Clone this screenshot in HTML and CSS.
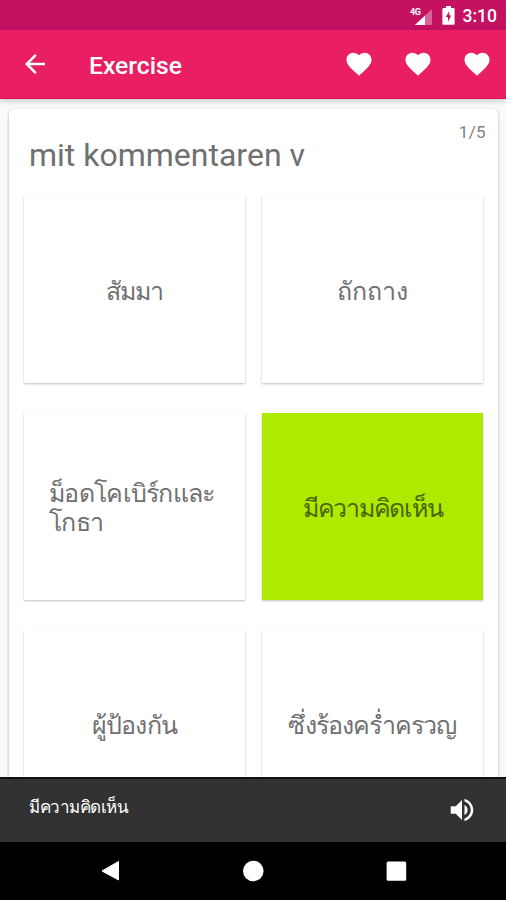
FILE: index.html
```html
<!DOCTYPE html>
<html lang="de">
<head>
<meta charset="utf-8">
<title>Exercise</title>
<link rel="stylesheet" href="styles.css">
</head>
<body>
<div class="screen">
  <div class="status">
    <svg class="signal" width="24" height="22" viewBox="0 0 24 22">
      <path d="M23 2v16H6z" fill="#fff" opacity=".35"/>
      <path d="M16 8.600V18H6z" fill="#fff"/>
      <text class="net" x="1" y="8">4G</text>
    </svg>
    <svg class="battery" width="13" height="19" viewBox="0 0 13 19">
      <path d="M4 0h5v2h2.600q1 0 1 1v14.800q0 1-1 1H1.400q-1 0-1-1V3q0-1 1-1H4z" fill="#fff"/>
      <path d="M7.300 5 3.800 11h2.200v4.700L9.200 9.500H7.300z" fill="#c51162"/>
    </svg>
    <span class="clock">3:10</span>
  </div>
  <header class="appbar">
    <svg class="back" width="30" height="30" viewBox="0 0 24 24"><path d="M20 11H7.830l5.590-5.590L12 4l-8 8 8 8 1.410-1.410L7.830 13H20z"/></svg>
    <h1>Exercise</h1>
    <div class="lives">
      <svg width="30" height="30" viewBox="0 0 24 24"><path d="M12 21.350l-1.450-1.320C5.400 15.360 2 12.280 2 8.500 2 5.420 4.420 3 7.500 3c1.740 0 3.410.810 4.500 2.090C13.090 3.810 14.760 3 16.500 3 19.580 3 22 5.420 22 8.500c0 3.780-3.400 6.860-8.550 11.540z"/></svg>
      <svg width="30" height="30" viewBox="0 0 24 24"><path d="M12 21.350l-1.450-1.320C5.400 15.360 2 12.280 2 8.500 2 5.420 4.420 3 7.500 3c1.740 0 3.410.810 4.500 2.090C13.090 3.810 14.760 3 16.500 3 19.580 3 22 5.420 22 8.500c0 3.780-3.400 6.860-8.550 11.540z"/></svg>
      <svg width="30" height="30" viewBox="0 0 24 24"><path d="M12 21.350l-1.450-1.320C5.400 15.360 2 12.280 2 8.500 2 5.420 4.420 3 7.500 3c1.740 0 3.410.810 4.500 2.090C13.090 3.810 14.760 3 16.500 3 19.580 3 22 5.420 22 8.500c0 3.780-3.400 6.860-8.550 11.540z"/></svg>
    </div>
  </header>
  <main>
    <section class="card">
      <div class="head">
        <h2>mit kommentaren v</h2>
        <span class="progress">1/5</span>
      </div>
      <div class="tiles" lang="th">
        <div class="tile"><span>สัมมา</span></div>
        <div class="tile loose"><span>ถักถาง</span></div>
        <div class="tile long"><span>ม็อดโคเบิร์กและ<br>โกธา</span></div>
        <div class="tile right"><span>มีความคิดเห็น</span></div>
        <div class="tile"><span>ผู้ป้องกัน</span></div>
        <div class="tile"><span>ซึ่งร้องคร่ำครวญ</span></div>
      </div>
    </section>
  </main>
  <div class="snackbar">
    <span class="answer" lang="th">มีความคิดเห็น</span>
    <svg width="30" height="30" viewBox="0 0 24 24"><path d="M3 9v6h4l5 5V4L7 9zm13.500 3c0-1.770-1.020-3.290-2.500-4.030v8.050c1.480-.730 2.500-2.250 2.500-4.020zM14 3.230v2.060c2.890.860 5 3.540 5 6.710s-2.110 5.850-5 6.710v2.060c4.010-.910 7-4.490 7-8.770s-2.990-7.860-7-8.770z"/></svg>
  </div>
  <nav class="navbar">
    <svg width="24" height="24" viewBox="0 0 24 24"><path d="M20.500 2.500v18.400L4 12z" stroke="#fff" stroke-linejoin="round"/></svg>
    <svg width="24" height="24" viewBox="0 0 24 24"><circle cx="12.300" cy="12" r="10.300"/></svg>
    <svg width="24" height="24" viewBox="0 0 24 24"><rect x="2.600" y="2.500" width="19.600" height="19.300" rx="1.500"/></svg>
  </nav>
</div>
</body>
</html>
```

FILE: styles.css
```css
* { box-sizing: border-box; }
body { margin: 0; font-family: Roboto, "Noto Sans", sans-serif; }
svg { display: block; flex: none; fill: #fff; }
.screen { width: 506px; height: 900px; display: flex; flex-direction: column; overflow: hidden; background: #fafafa; }

.status { height: 30px; flex: none; display: flex; align-items: center; justify-content: flex-end; padding: 1px 9px 0 0; background: #c51162; color: #fff; }
.signal { margin: 4px 9px 0 0; }
.net { font: 700 9px Roboto, sans-serif; letter-spacing: -0.5px; }
.battery { margin-right: 8px; }
.clock { font-size: 17.500px; font-weight: 500; line-height: 30px; }

.appbar { height: 69px; flex: none; display: flex; align-items: center; padding: 0 14px 0 20px; background: #e91e63; color: #fff; border-bottom: 1px solid #e00b52; box-shadow: 0 2px 6px rgba(0,0,0,.2); position: relative; }
.appbar h1 { margin: 3px 0 0 39px; font-size: 24.700px; font-weight: 500; line-height: 32px; }
.lives { display: flex; gap: 29px; margin-left: auto; }

main { flex: 1; min-height: 0; overflow: hidden; padding: 10px 8px 0 9px; }
.card { height: 720px; padding: 0 15px; border-radius: 5px; background: #fff; box-shadow: 0 1px 3px rgba(0,0,0,.32); }
.head { height: 87px; display: flex; justify-content: space-between; color: #707070; }
.head h2 { margin: 26px 0 0 5px; font-size: 32px; font-weight: 400; line-height: 40px; }
.progress { margin: 12px -3px 0 0; font-size: 17px; line-height: 22px; color: #808080; letter-spacing: .4px; }
.tiles { display: grid; grid-template-columns: 221px 221px; grid-auto-rows: 187px; gap: 30px 17px; }
.tile { display: flex; align-items: center; justify-content: center; padding-top: 3px; background: #fff; color: #707070; font-size: 25px; line-height: 29px; letter-spacing: -.9px; box-shadow: 0 1px 2px rgba(0,0,0,.26); }
.loose { letter-spacing: -.1px; }
.long { justify-content: flex-start; padding-left: 25px; letter-spacing: -.7px; }
.right { background: #aeea00; color: #4b6500; letter-spacing: -1.250px; }

.snackbar { height: 65px; flex: none; display: flex; align-items: center; justify-content: space-between; padding: 0 29px 2px; background: #323232; border-top: 2px solid #111; color: #fff; }
.answer { font-size: 17px; line-height: 24px; letter-spacing: -.5px; margin-bottom: 5px; }
.navbar { height: 58px; flex: none; display: flex; align-items: center; justify-content: center; gap: 119px; background: #000; }
```
